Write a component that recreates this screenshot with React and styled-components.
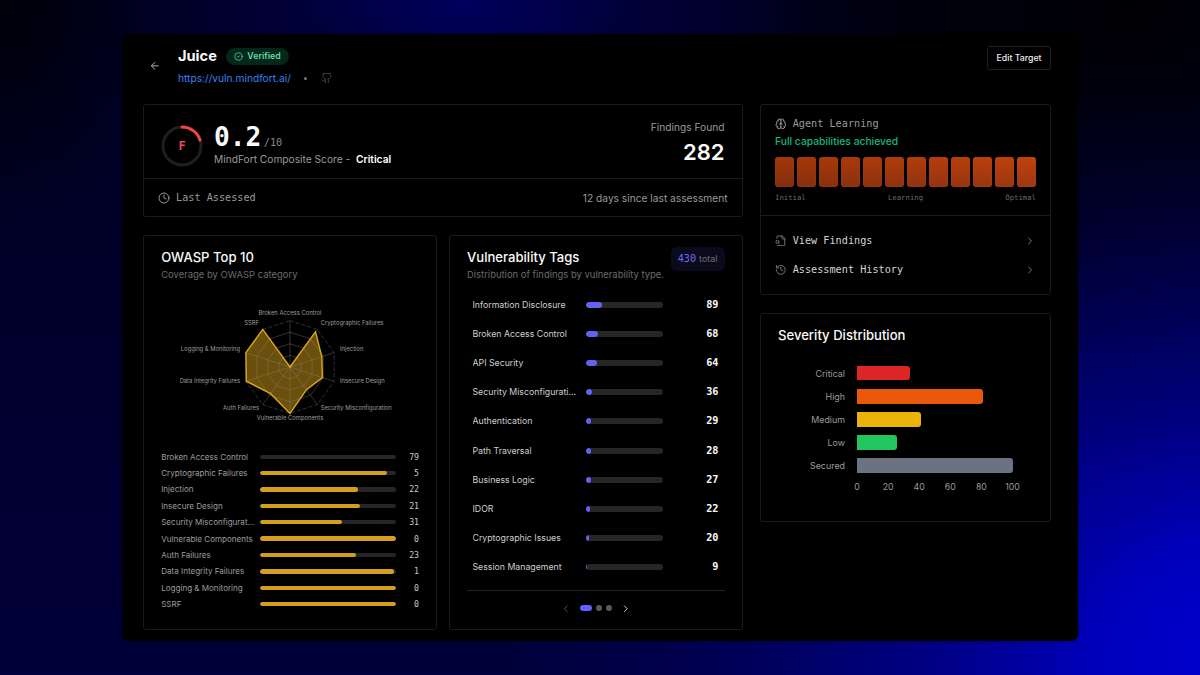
import React from "react";
import styled, { createGlobalStyle } from "styled-components";
import {
  ArrowLeft, CircleCheck, Github, Clock, Brain, History, ChevronRight, ChevronLeft,
} from "lucide-react";

const sans = `Inter, "Liberation Sans", sans-serif`;
const mono = `"DejaVu Sans Mono", "Liberation Mono", monospace`;

const GlobalStyle = createGlobalStyle`
  *, *::before, *::after { box-sizing: border-box; }
  body { margin: 0; background: #00001e; font-family: ${sans}; }
  svg { display: block; flex: none; }
`;

const Backdrop = styled.main`
  width: 1200px;
  height: 675px;
  overflow: hidden;
  padding: 34px 122px;
  background:
    radial-gradient(ellipse 730px 620px at 1240px 665px,
      rgba(0, 0, 215, 0.98) 0%, rgba(0, 0, 215, 0.82) 20%, rgba(0, 0, 215, 0.66) 29%,
      rgba(0, 0, 215, 0.46) 43%, rgba(0, 0, 215, 0.23) 65%, rgba(0, 0, 215, 0.1) 80%, rgba(0, 0, 215, 0) 100%),
    radial-gradient(ellipse 340px 260px at 465px -10px, rgba(0, 0, 100, 0.95) 0%, rgba(0, 0, 80, 0.55) 45%, rgba(0, 0, 50, 0) 100%),
    radial-gradient(ellipse 420px 480px at 1130px 0px, #000004 0%, rgba(0, 0, 8, 0.75) 50%, rgba(0, 0, 12, 0) 100%),
    radial-gradient(ellipse 160px 240px at 0px 0px, rgba(0, 0, 8, 0.9) 0%, rgba(0, 0, 10, 0) 100%),
    linear-gradient(180deg, #000020 0%, #00002c 50%, #00003a 100%);
`;

const Window = styled.div`
  width: 956px;
  height: 607px;
  padding: 0 27px 0 21px;
  border-radius: 7px;
  background: #000;
  box-shadow: 0 0 3px rgba(0, 0, 0, 0.5);
  color: #fafafa;
`;

const Header = styled.header`
  display: flex;
  height: 70px;
  padding-top: 12px;
`;

const BackButton = styled.div`
  width: 35px;
  padding: 14px 0 0 6px;
  color: #b5b5b5;
`;

const Heading = styled.div`
  flex: 1;
`;

const TitleRow = styled.div`
  display: flex;
  align-items: center;
  gap: 9px;
  height: 21px;
`;

const Title = styled.h1`
  margin: 0;
  font-size: 14.6px;
  font-weight: 700;
  line-height: 21px;
`;

const Verified = styled.span`
  display: flex;
  align-items: center;
  gap: 4.5px;
  height: 17px;
  margin-bottom: 1px;
  padding: 0 8.5px 0 8px;
  border-radius: 9px;
  background: #03271a;
  color: #62d9a6;
  font-size: 8.75px;
  font-weight: 600;
`;

const MetaRow = styled.div`
  display: flex;
  align-items: center;
  height: 22px;
  color: #454545;
`;

const Link = styled.span`
  color: #3a80f0;
  font-size: 10.2px;
`;

const Bullet = styled.span`
  width: 3px;
  height: 3px;
  margin: 0 13.5px 0 13.5px;
  border-radius: 50%;
  background: #777;
`;

const EditButton = styled.button`
  width: 64px;
  height: 24px;
  padding: 0;
  border: 1px solid #202020;
  border-radius: 3px;
  background: #000;
  color: #ededed;
  font: 500 8.75px ${sans};
`;

const Columns = styled.div`
  display: flex;
  gap: 17px;
`;

const Column = styled.div`
  display: flex;
  flex-direction: column;
  gap: 18px;
  width: ${(p) => p.$width}px;
`;

const Card = styled.section`
  width: ${(p) => (p.$width ? `${p.$width}px` : "100%")};
  height: ${(p) => p.$height}px;
  padding: ${(p) => p.$pad || "0"};
  border: 1px solid #1b1b1b;
  border-radius: 3px;
`;

const CardPair = styled.div`
  display: flex;
  gap: 12px;
`;

const ScoreTop = styled.div`
  display: flex;
  height: 74px;
  padding: 14px 17.5px 0 17px;
  border-bottom: 1px solid #1b1b1b;
`;

const Gauge = styled.div`
  display: grid;
  width: 42px;
  height: 42px;
  margin-top: 5.5px;
  > * { grid-area: 1 / 1; place-self: center; }
`;

const Grade = styled.span`
  color: #e5484d;
  font: 700 12px/14px ${mono};
`;

const ScoreText = styled.div`
  flex: 1;
  padding-left: 11px;
`;

const ScoreLine = styled.div`
  display: flex;
  align-items: baseline;
  gap: 2.5px;
  height: 33px;
`;

const ScoreValue = styled.span`
  font: 700 26.2px/36px ${mono};
`;

const ScoreMax = styled.span`
  color: #8a8a8a;
  font: 400 10.2px/14px ${mono};
`;

const Caption = styled.div`
  color: #9a9a9a;
  font-size: 10.2px;
  line-height: 14px;
  b { margin-left: 3px; color: #fff; font-weight: 600; }
`;

const Findings = styled.div`
  padding-top: 1px;
  text-align: right;
`;

const FindingsValue = styled.div`
  margin-top: 1px;
  font-size: 22px;
  font-weight: 600;
  line-height: 34px;
`;

const AssessedRow = styled.div`
  display: flex;
  align-items: center;
  justify-content: space-between;
  height: 37px;
  padding: 0 14.5px 0 14px;
`;

const MonoLabel = styled.div`
  display: flex;
  align-items: center;
  gap: 6px;
  color: ${(p) => p.$color || "#9a9a9a"};
  font: 400 10.2px/14px ${mono};
`;

const CardTitle = styled.h2`
  margin: 0;
  font-size: 13.1px;
  font-weight: 500;
  line-height: 18px;
`;

const CardNote = styled.p`
  margin: 2px 0 0;
  color: #6b6b6b;
  font-size: 9.45px;
  line-height: 14px;
  white-space: nowrap;
`;

const RadarBox = styled.div`
  height: 157px;
  margin: 5px 0 5px;
  text { font: 5.85px ${sans}; fill: #9c9c9c; }
`;

const OwaspRow = styled.div`
  display: flex;
  align-items: center;
  height: 16.4px;
`;

const OwaspName = styled.span`
  width: 94px;
  margin-right: 5px;
  overflow: hidden;
  color: #9c9c9c;
  font-size: 8.05px;
  text-overflow: ellipsis;
  white-space: nowrap;
`;

const Track = styled.div`
  width: ${(p) => p.$width}px;
  height: ${(p) => p.$height}px;
  border-radius: 3px;
  background: #262626;
  overflow: hidden;
`;

const Fill = styled.div`
  height: 100%;
  border-radius: 3px;
  background: ${(p) => p.$color};
`;

const OwaspCount = styled.span`
  flex: 1;
  color: #c9c9c9;
  text-align: right;
  font: 400 8.2px/12px ${mono};
`;

const TagsHead = styled.div`
  display: flex;
  justify-content: space-between;
  height: 43.8px;
`;

const TagsHeadText = styled.div`
  width: 200px;
  padding-top: 1px;
`;

const TotalBadge = styled.span`
  display: flex;
  align-items: center;
  justify-content: center;
  gap: 3px;
  width: 54px;
  height: 24px;
  border-radius: 6px;
  background: #0b0a1d;
  color: #707070;
  font-size: 8.9px;
  b { color: #6f6cf5; font: 400 10.2px ${mono}; }
`;

const TagRow = styled.div`
  display: flex;
  align-items: center;
  height: 29.15px;
  padding: 0 6px 0 5.5px;
`;

const TagName = styled.span`
  width: 105px;
  margin-right: 8.3px;
  overflow: hidden;
  color: #cfcfcf;
  font-size: 8.75px;
  text-overflow: ellipsis;
  white-space: nowrap;
`;

const TagCount = styled.span`
  flex: 1;
  text-align: right;
  font: 700 10.2px/14px ${mono};
`;

const Pager = styled.div`
  display: flex;
  align-items: center;
  justify-content: center;
  gap: 4.4px;
  height: 36px;
  margin-top: 8.2px;
  border-top: 1px solid #222;
`;

const Dot = styled.span`
  width: ${(p) => (p.$active ? 11.7 : 6)}px;
  height: 6px;
  border-radius: 3px;
  background: ${(p) => (p.$active ? "#615fff" : "#5a5a5a")};
`;

const PagerArrow = styled.span`
  margin: ${(p) => (p.$next ? "0 0 0 3px" : "0 4px 0 0")};
  color: ${(p) => (p.$next ? "#c8c8c8" : "#555")};
`;

const AgentTop = styled.div`
  height: 111px;
  padding: 12px 14px 0 14px;
  border-bottom: 1px solid #1b1b1b;
`;

const AgentStatus = styled.div`
  margin-top: 3px;
  color: #10b981;
  font-size: 10.3px;
  font-weight: 500;
  line-height: 14px;
`;

const Segments = styled.div`
  display: grid;
  grid-template-columns: repeat(12, 1fr);
  gap: 2.9px;
  height: 30px;
  margin-top: 9px;
`;

const Segment = styled.div`
  border-radius: 3px;
  background: linear-gradient(to top, #9c3812, #c2410c);
  box-shadow: inset 0 0 0 1px rgba(194, 65, 12, 0.3);
  opacity: ${(p) => p.$strength};
`;

const Scale = styled.div`
  display: flex;
  justify-content: space-between;
  margin-top: 5px;
  color: #6a6a6a;
  font: 400 7.3px/12px ${mono};
`;

const Actions = styled.div`
  padding: 10px 14px 0;
`;

const ActionRow = styled.div`
  display: flex;
  align-items: center;
  justify-content: space-between;
  height: 29.2px;
  svg { color: #777; }
`;

const SeverityTitle = styled(CardTitle)`
  margin-bottom: 17.5px;
`;

const SeverityRow = styled.div`
  display: flex;
  align-items: center;
  height: 23.1px;
`;

const SeverityName = styled.span`
  width: 67px;
  margin-right: 12px;
  color: #9b9b9b;
  font-size: 8.9px;
  text-align: right;
`;

const SeverityBar = styled.div`
  height: 14.8px;
  border-radius: 0 3px 3px 0;
  background: ${(p) => p.$color};
`;

const Axis = styled.div`
  display: flex;
  justify-content: space-between;
  width: 186.5px;
  margin: 2.5px 0 0 63.5px;
  color: #9b9b9b;
  font-size: 8.75px;
  line-height: 16px;
  span { width: 31px; text-align: center; }
`;

const owasp = [
  ["Broken Access Control", 79, 0],
  ["Cryptographic Failures", 5, 93.5],
  ["Injection", 22, 72],
  ["Insecure Design", 21, 73.5],
  ["Security Misconfiguration", 31, 60.5],
  ["Vulnerable Components", 0, 100],
  ["Auth Failures", 23, 71],
  ["Data Integrity Failures", 1, 99],
  ["Logging & Monitoring", 0, 100],
  ["SSRF", 0, 100],
];

const tags = [
  ["Information Disclosure", 89],
  ["Broken Access Control", 68],
  ["API Security", 64],
  ["Security Misconfiguration", 36],
  ["Authentication", 29],
  ["Path Traversal", 28],
  ["Business Logic", 27],
  ["IDOR", 22],
  ["Cryptographic Issues", 20],
  ["Session Management", 9],
];

const severities = [
  ["Critical", 34, "#dc2626"],
  ["High", 81, "#ea580c"],
  ["Medium", 41, "#eab308"],
  ["Low", 26, "#22c55e"],
  ["Secured", 100, "#6b7280"],
];

const CX = 129;
const CY = 80;
const R = 46.4;
const point = (i, r) => {
  const a = (i * Math.PI) / 5;
  return [CX + r * Math.sin(a), CY - r * Math.cos(a)];
};
const ring = (f) => owasp.map((_, i) => point(i, R * f).join(",")).join(" ");

const labelAt = [
  [0, -54.7, "middle"], [30.7, -44.3, "start"], [50, -18, "start"], [50, 14, "start"],
  [30.7, 40.3, "start"], [0, 50.4, "middle"], [-31, 40.3, "end"], [-50, 14, "end"],
  [-50, -18, "end"], [-31, -44.3, "end"],
];

function Radar() {
  return (
    <RadarBox>
      <svg width="257" height="157" viewBox="0 0 257 157">
        <polygon
          points={owasp.map(([, , v], i) => point(i, (R * v) / 100).join(",")).join(" ")}
          fill="#d4a017"
          fillOpacity="0.5"
        />
        <g fill="none" stroke="#8a8a8a" strokeOpacity="0.5" strokeWidth="0.73">
          {[0.25, 0.5, 0.75, 1].map((f) => (
            <polygon key={f} points={ring(f)} strokeDasharray={f === 1 ? "4 2" : undefined} />
          ))}
          {owasp.map(([name], i) => {
            const [x, y] = point(i, R);
            return <line key={name} x1={CX} y1={CY} x2={x} y2={y} />;
          })}
        </g>
        <polygon
          points={owasp.map(([, , v], i) => point(i, (R * v) / 100).join(",")).join(" ")}
          fill="none"
          stroke="#dba617"
          strokeWidth="1.4"
        />
        {owasp.map(([name], i) => (
          <text key={name} x={CX + labelAt[i][0]} y={CY + labelAt[i][1] + 2.2} textAnchor={labelAt[i][2]}>
            {name}
          </text>
        ))}
      </svg>
    </RadarBox>
  );
}

function FileLensIcon() {
  return (
    <svg
      width="11.7" height="11.7" viewBox="0 0 24 24" fill="none" stroke="currentColor"
      strokeWidth="2" strokeLinecap="round" strokeLinejoin="round"
    >
      <path d="M14 2v4a2 2 0 0 0 2 2h4" />
      <path d="M4.268 21a2 2 0 0 0 1.727 1H18a2 2 0 0 0 2-2V7l-5-5H6a2 2 0 0 0-2 2v3" />
      <path d="m9 18-1.5-1.5" />
      <circle cx="5" cy="14" r="3" />
    </svg>
  );
}

export default function App() {
  return (
    <Backdrop>
      <GlobalStyle />
      <Window>
        <Header>
          <BackButton><ArrowLeft size={11.7} /></BackButton>
          <Heading>
            <TitleRow>
              <Title>Juice</Title>
              <Verified><CircleCheck size={9} />Verified</Verified>
            </TitleRow>
            <MetaRow>
              <Link>https://vuln.mindfort.ai/</Link>
              <Bullet />
              <Github size={11.7} />
            </MetaRow>
          </Heading>
          <EditButton>Edit Target</EditButton>
        </Header>
        <Columns>
          <Column $width={600}>
            <Card $height={113}>
              <ScoreTop>
                <Gauge>
                  <svg width="42" height="42" viewBox="0 0 42 42" fill="none" strokeWidth="3">
                    <circle cx="21" cy="21" r="19" stroke="#1f1f1f" />
                    <circle
                      cx="21" cy="21" r="19" stroke="#ef4444" strokeLinecap="round"
                      pathLength="100" strokeDasharray="20 80" transform="rotate(-90 21 21)"
                    />
                  </svg>
                  <Grade>F</Grade>
                </Gauge>
                <ScoreText>
                  <ScoreLine>
                    <ScoreValue>0.2</ScoreValue>
                    <ScoreMax>/10</ScoreMax>
                  </ScoreLine>
                  <Caption>MindFort Composite Score - <b>Critical</b></Caption>
                </ScoreText>
                <Findings>
                  <Caption>Findings Found</Caption>
                  <FindingsValue>282</FindingsValue>
                </Findings>
              </ScoreTop>
              <AssessedRow>
                <MonoLabel><Clock size={12} />Last Assessed</MonoLabel>
                <Caption>12 days since last assessment</Caption>
              </AssessedRow>
            </Card>
            <CardPair>
              <Card $width={294} $height={395} $pad="11.5px 17px 0 17.2px">
                <CardTitle>OWASP Top 10</CardTitle>
                <CardNote>Coverage by OWASP category</CardNote>
                <Radar />
                {owasp.map(([name, count, v]) => (
                  <OwaspRow key={name}>
                    <OwaspName>{name}</OwaspName>
                    <Track $width={135.5} $height={4.4}>
                      <Fill $color="#d4a01c" style={{ width: `${v}%` }} />
                    </Track>
                    <OwaspCount>{count}</OwaspCount>
                  </OwaspRow>
                ))}
              </Card>
              <Card $width={294} $height={395} $pad="10.5px 17.5px 0 17px">
                <TagsHead>
                  <TagsHeadText>
                    <CardTitle>Vulnerability Tags</CardTitle>
                    <CardNote>Distribution of findings by vulnerability type.</CardNote>
                  </TagsHeadText>
                  <TotalBadge><b>430</b>total</TotalBadge>
                </TagsHead>
                {tags.map(([name, count]) => (
                  <TagRow key={name}>
                    <TagName>{name}</TagName>
                    <Track $width={77.5} $height={6}>
                      <Fill $color="#6462f3" style={{ width: `${(count / 430) * 100}%` }} />
                    </Track>
                    <TagCount>{count}</TagCount>
                  </TagRow>
                ))}
                <Pager>
                  <PagerArrow><ChevronLeft size={11.7} /></PagerArrow>
                  <Dot $active />
                  <Dot />
                  <Dot />
                  <PagerArrow $next><ChevronRight size={11.7} /></PagerArrow>
                </Pager>
              </Card>
            </CardPair>
          </Column>
          <Column $width={291}>
            <Card $height={191}>
              <AgentTop>
                <MonoLabel><Brain size={11.7} />Agent Learning</MonoLabel>
                <AgentStatus>Full capabilities achieved</AgentStatus>
                <Segments>
                  {Array.from({ length: 12 }, (_, i) => (
                    <Segment key={i} $strength={0.84 + i * 0.0145} />
                  ))}
                </Segments>
                <Scale><span>Initial</span><span>Learning</span><span>Optimal</span></Scale>
              </AgentTop>
              <Actions>
                <ActionRow>
                  <MonoLabel $color="#d4d4d4"><FileLensIcon />View Findings</MonoLabel>
                  <ChevronRight size={12} />
                </ActionRow>
                <ActionRow>
                  <MonoLabel $color="#d4d4d4"><History size={11.7} />Assessment History</MonoLabel>
                  <ChevronRight size={12} />
                </ActionRow>
              </Actions>
            </Card>
            <Card $height={209} $pad="12px 17px 0">
              <SeverityTitle>Severity Distribution</SeverityTitle>
              {severities.map(([name, value, color]) => (
                <SeverityRow key={name}>
                  <SeverityName>{name}</SeverityName>
                  <SeverityBar $color={color} style={{ width: value * 1.557 }} />
                </SeverityRow>
              ))}
              <Axis>
                {[0, 20, 40, 60, 80, 100].map((n) => <span key={n}>{n}</span>)}
              </Axis>
            </Card>
          </Column>
        </Columns>
      </Window>
    </Backdrop>
  );
}
